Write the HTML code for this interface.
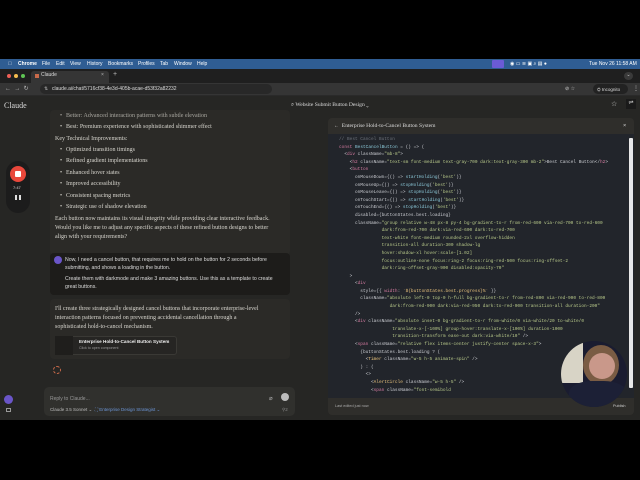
<!DOCTYPE html>
<html><head><meta charset="utf-8"><style>
*{margin:0;padding:0;box-sizing:border-box}
body{width:640px;height:480px;background:#000;position:relative;overflow:hidden;font-family:"Liberation Sans",sans-serif;color:#ddd}
.a{position:absolute}
.menu{left:0;top:59px;width:640px;height:10px;background:#2f5d93;font-size:5px;color:#fff;font-weight:bold}
.menu span{position:absolute;top:2px}
.tabs{left:0;top:69px;width:640px;height:14px;background:#1f1f1f}
.tool{left:0;top:83px;width:640px;height:13px;background:#353535;border-bottom:1px solid #2a2a2a}
.app{left:0;top:96px;width:640px;height:324px;background:#262624}
.serif{font-family:"Liberation Serif",serif}
.chat{font-family:"Liberation Serif",serif;font-size:6px;color:#d8d6cf}
.chat div{position:absolute;white-space:nowrap}
.bul::before{content:"•";position:absolute;left:-6px}
pre{font-family:"Liberation Mono",monospace;font-size:4.45px;line-height:7.6px;color:#c9cbd0}
.k{color:#d47aa0}.g{color:#b8c98a}.c{color:#8bc8d8}.m{color:#6b7079}.y{color:#e6c07b}
</style></head><body>
<div class="a menu">
<span style="left:8px">&#63743;</span><span style="left:18px">Chrome</span><span style="left:42px;font-weight:normal">File</span><span style="left:56px;font-weight:normal">Edit</span><span style="left:70px;font-weight:normal">View</span><span style="left:87px;font-weight:normal">History</span><span style="left:108px;font-weight:normal">Bookmarks</span><span style="left:138px;font-weight:normal">Profiles</span><span style="left:160px;font-weight:normal">Tab</span><span style="left:174px;font-weight:normal">Window</span><span style="left:197px;font-weight:normal">Help</span>
<div class="a" style="left:492px;top:1px;width:12px;height:8px;background:#6b5bd6;border-radius:1px"></div>
<span style="left:510px;font-weight:normal">◉ ▭ ≋ ▣ ⌕ ▤ ●</span>
<span style="left:589px;font-weight:normal">Tue Nov 26 11:58 AM</span>
</div>
<div class="a tabs">
<div class="a" style="left:7px;top:5px;width:4px;height:4px;border-radius:50%;background:#ed5f57"></div>
<div class="a" style="left:14px;top:5px;width:4px;height:4px;border-radius:50%;background:#f5bd4f"></div>
<div class="a" style="left:21px;top:5px;width:4px;height:4px;border-radius:50%;background:#5fc454"></div>
<div class="a" style="left:31px;top:2px;width:78px;height:12px;background:#353535;border-radius:3px 3px 0 0"></div>
<div class="a" style="left:35px;top:5px;width:4px;height:4px;background:#c96a4a"></div>
<div class="a" style="left:41px;top:3px;font-size:5px;color:#ddd">Claude</div>
<div class="a" style="left:101px;top:3px;font-size:5px;color:#bbb">×</div>
<div class="a" style="left:113px;top:2px;font-size:7px;color:#bbb">+</div>
<div class="a" style="left:624px;top:3px;width:9px;height:8px;border-radius:50%;background:#3a3a3a;font-size:5px;text-align:center;color:#ccc">⌄</div>
</div>
<div class="a tool">
<div class="a" style="left:5px;top:2px;font-size:6px;color:#bbb">←&nbsp;&nbsp;→&nbsp;&nbsp;↻</div>
<div class="a" style="left:40px;top:1px;width:232px;height:10px;border-radius:5px;background:#282828"></div>
<div class="a" style="left:44px;top:3px;font-size:5px;color:#aaa">⇅</div>
<div class="a" style="left:52px;top:3px;font-size:5px;color:#ddd">claude.ai/chat/5716cf38-4e3d-405b-acae-d53f32a82232</div>
<div class="a" style="left:565px;top:3px;font-size:5px;color:#ccc">⊘ ☆</div>
<div class="a" style="left:593px;top:1px;width:35px;height:10px;border-radius:5px;background:#222;font-size:4.5px;color:#ddd;padding:2.5px 0 0 4px">⛭ Incognito</div>
<div class="a" style="left:633px;top:2px;font-size:6px;color:#ccc">⋮</div>
</div>
<div class="a app">
<div class="a serif" style="left:4px;top:5px;font-size:8px;color:#ddd">Claude</div>
<div class="a serif" style="left:291px;top:6px;font-size:5.6px;color:#ddd">⌕ Website Submit Button Design ⌄</div>
<div class="a" style="left:611px;top:4px;font-size:7px;color:#ccc">☆</div>
<div class="a" style="left:626px;top:3px;width:10px;height:10px;background:#1a1a1a;font-size:6px;text-align:center;color:#ccc">⇌</div>
<div class="a" style="left:50px;top:14px;width:240px;height:145px;background:#2b2a27;border-radius:4px"></div>
<div class="a" style="left:6px;top:65px;width:24px;height:52px;border-radius:12px;background:#1c1c1c"></div>
<div class="a" style="left:10px;top:70px;width:16px;height:16px;border-radius:50%;background:#e8473b"></div>
<div class="a" style="left:15px;top:75px;width:6px;height:6px;background:#fff;border-radius:1px"></div>
<div class="a" style="left:13px;top:89px;font-size:4px;color:#ddd">7:47</div>
<div class="a" style="left:15px;top:99px;width:2px;height:5px;background:#ddd"></div>
<div class="a" style="left:19px;top:99px;width:2px;height:5px;background:#ddd"></div>
<div class="chat">
<div class="bul" style="left:66px;top:17px;color:#a9a7a0">Better: Advanced interaction patterns with subtle elevation</div>
<div class="bul" style="left:66px;top:28px">Best: Premium experience with sophisticated shimmer effect</div>
<div style="left:55px;top:40px">Key Technical Improvements:</div>
<div class="bul" style="left:66px;top:51px">Optimized transition timings</div>
<div class="bul" style="left:66px;top:62px">Refined gradient implementations</div>
<div class="bul" style="left:66px;top:74px">Enhanced hover states</div>
<div class="bul" style="left:66px;top:85px">Improved accessibility</div>
<div class="bul" style="left:66px;top:97px">Consistent spacing metrics</div>
<div class="bul" style="left:66px;top:108px">Strategic use of shadow elevation</div>
<div style="left:55px;top:120px">Each button now maintains its visual integrity while providing clear interactive feedback.</div>
<div style="left:55px;top:129px">Would you like me to adjust any specific aspects of these refined button designs to better</div>
<div style="left:55px;top:138px">align with your requirements?</div>
</div>
<div class="a" style="left:50px;top:157px;width:240px;height:42px;background:#1d1c1a;border-radius:4px"></div>
<div class="a" style="left:54px;top:160px;width:8px;height:8px;border-radius:50%;background:#6a55c8"></div>
<div class="a" style="left:65px;top:160px;font-size:5.2px;color:#ddd;line-height:8px;white-space:nowrap">Now, I need a cancel button, that requires me to hold on the button for 2 seconds before<br>submitting, and shows a loading in the button.</div>
<div class="a" style="left:65px;top:179px;font-size:5.2px;color:#ddd;line-height:8px;white-space:nowrap">Create them with darkmode and make 3 amazing buttons. Use this as a template to create<br>great buttons.</div>
<div class="a" style="left:50px;top:203px;width:240px;height:60px;background:#2b2a27;border-radius:4px"></div>
<div class="a chat" style="left:55px;top:209px;line-height:9px;white-space:nowrap">I'll create three strategically designed cancel buttons that incorporate enterprise-level<br>interaction patterns focused on preventing accidental cancellation through a<br>sophisticated hold-to-cancel mechanism.</div>
<div class="a" style="left:55px;top:240px;width:122px;height:19px;border:1px solid #3a3935;border-radius:3px;background:#262523"></div>
<div class="a" style="left:55px;top:240px;width:18px;height:19px;background:#1f1e1c"></div>
<div class="a" style="left:79px;top:243px;font-size:4.6px;color:#eee;font-weight:bold">Enterprise Hold-to-Cancel Button System</div>
<div class="a" style="left:79px;top:250px;font-size:3.6px;color:#999">Click to open component</div>
<div class="a" style="left:53px;top:270px;width:8px;height:8px;border-radius:50%;border:1px dashed #c96a4a"></div>
<div class="a" style="left:44px;top:291px;width:251px;height:29px;background:#30302d;border-radius:5px"></div>
<div class="a" style="left:50px;top:300px;font-size:5px;color:#999">Reply to Claude...</div>
<div class="a" style="left:50px;top:311px;font-size:4.5px;color:#bbb">Claude 3.5 Sonnet ⌄ &nbsp;<span style="color:#6c95d6">⛶ Enterprise Design Strategist ⌄</span></div>
<div class="a" style="left:269px;top:299px;font-size:6px;color:#aaa">⌀</div>
<div class="a" style="left:281px;top:297px;width:8px;height:8px;border-radius:50%;background:#bbb"></div>
<div class="a" style="left:282px;top:311px;font-size:4.5px;color:#888">⚲2</div>
<div class="a" style="left:4px;top:299px;width:9px;height:9px;border-radius:50%;background:#6a55c8"></div>
<div class="a" style="left:6px;top:312px;width:5px;height:4px;border:1px solid #999"></div>
<div class="a" style="left:328px;top:22px;width:306px;height:297px;background:#2f2e2b;border-radius:4px"></div>
<div class="a" style="left:334px;top:27px;font-size:5px;color:#ddd">← &nbsp;<span class="serif" style="font-size:5.6px">Enterprise Hold-to-Cancel Button System</span></div>
<div class="a" style="left:623px;top:27px;font-size:5.5px;color:#ddd">×</div>
<div class="a" style="left:328px;top:38px;width:306px;height:264px;background:#22252b"></div>
<div class="a" style="left:629px;top:42px;width:4px;height:250px;background:#e8e8e8;border-radius:1px"></div>
<pre class="a" style="left:339px;top:40px">
<span class="m">// Best Cancel Button</span>
<span class="k">const</span> <span class="c">BestCancelButton</span> = () =&gt; (
  &lt;<span class="k">div</span> className=<span class="g">"mb-8"</span>&gt;
    &lt;<span class="k">h2</span> className=<span class="g">"text-sm font-medium text-gray-700 dark:text-gray-300 mb-2"</span>&gt;Best Cancel Button&lt;/<span class="k">h2</span>&gt;
    &lt;<span class="k">button</span>
      onMouseDown={() =&gt; <span class="c">startHolding</span>(<span class="g">'best'</span>)}
      onMouseUp={() =&gt; <span class="c">stopHolding</span>(<span class="g">'best'</span>)}
      onMouseLeave={() =&gt; <span class="c">stopHolding</span>(<span class="g">'best'</span>)}
      onTouchStart={() =&gt; <span class="c">startHolding</span>(<span class="g">'best'</span>)}
      onTouchEnd={() =&gt; <span class="c">stopHolding</span>(<span class="g">'best'</span>)}
      disabled={buttonStates.best.loading}
      className=<span class="g">"group relative w-48 px-8 py-4 bg-gradient-to-r from-red-600 via-red-700 to-red-600
                dark:from-red-700 dark:via-red-600 dark:to-red-700
                text-white font-medium rounded-2xl overflow-hidden
                transition-all duration-300 shadow-lg
                hover:shadow-xl hover:scale-[1.02]
                focus:outline-none focus:ring-2 focus:ring-red-500 focus:ring-offset-2
                dark:ring-offset-gray-900 disabled:opacity-70"</span>
    &gt;
      &lt;<span class="k">div</span>
        style={{ <span class="k">width</span>: <span class="y">`${buttonStates.best.progress}%`</span> }}
        className=<span class="g">"absolute left-0 top-0 h-full bg-gradient-to-r from-red-800 via-red-900 to-red-800
                   dark:from-red-900 dark:via-red-950 dark:to-red-900 transition-all duration-200"</span>
      /&gt;
      &lt;<span class="k">div</span> className=<span class="g">"absolute inset-0 bg-gradient-to-r from-white/0 via-white/20 to-white/0
                    translate-x-[-100%] group-hover:translate-x-[100%] duration-1000
                    transition-transform ease-out dark:via-white/10"</span> /&gt;
      &lt;<span class="k">span</span> className=<span class="g">"relative flex items-center justify-center space-x-3"</span>&gt;
        {buttonStates.best.loading ? (
          &lt;<span class="y">Timer</span> className=<span class="g">"w-5 h-5 animate-spin"</span> /&gt;
        ) : (
          &lt;&gt;
            &lt;<span class="y">AlertCircle</span> className=<span class="g">"w-5 h-5"</span> /&gt;
            &lt;<span class="k">span</span> className=<span class="g">"font-semibold</span>
</pre>
<div class="a" style="left:335px;top:308px;font-size:3.8px;color:#aaa">Last edited just now</div>
<div class="a" style="left:613px;top:308px;font-size:3.8px;color:#ccc">Publish</div>
<div class="a" style="left:561px;top:245px;width:66px;height:66px;border-radius:50%;background:#1a1c30;overflow:hidden">
<div class="a" style="left:0;top:0;width:22px;height:42px;background:#d8d4c6"></div>
<div class="a" style="left:22px;top:4px;width:36px;height:40px;border-radius:50%;background:#7a5c44"></div>
<div class="a" style="left:28px;top:12px;width:26px;height:26px;border-radius:50%;background:#c9988a"></div>
<div class="a" style="left:8px;top:40px;width:58px;height:30px;border-radius:40% 40% 0 0;background:#1c2036"></div>
</div>
</div>
</body></html>
